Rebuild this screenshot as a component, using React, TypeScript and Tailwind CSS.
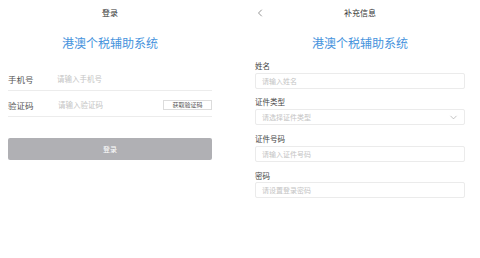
import { ChevronDown, ChevronLeft } from 'lucide-react'

const font = { fontFamily: '"Noto Sans CJK SC", "Noto Sans", sans-serif' }

function Field({ label, placeholder, select, labelTop, inputTop }: { label: string; placeholder: string; select?: boolean; labelTop: string; inputTop: string }) {
    return (
        <div>
            <p className={`${labelTop} text-[7.5px] leading-[10px] text-[#444]`}>{label}</p>
            <div className={`${inputTop} h-[16px] border border-[#ebebeb] rounded-[2px] flex items-center justify-between pl-[6px] pr-[5px]`}>
                <span className="text-[7px] leading-[10px] text-[#c4c4c4]">{placeholder}</span>
                {select && <ChevronDown className="w-[11px] h-[11px] text-[#a8a8a8]" strokeWidth={1.5} />}
            </div>
        </div>
    )
}

export default function App() {
    return (
        <main className="w-[480px] h-[258px] bg-white flex" style={font}>
            {/* 登录 */}
            <div className="w-[220px] px-[8px]">
                <div className="h-[26px] flex items-center justify-center">
                    <span className="text-[8px] text-[#333]">登录</span>
                </div>
                <h1 className="mt-[9px] h-[16px] text-center text-[12px] leading-[16px] text-[#4693dd]">港澳个税辅助系统</h1>

                <div className="mt-[17px] h-[23px] flex items-center border-b border-[#ececec]">
                    <span className="w-[49px] text-[8.5px] text-[#555]">手机号</span>
                    <span className="text-[7.5px] text-[#c4c4c4]">请输入手机号</span>
                </div>
                <div className="mt-[3px] h-[23px] flex items-center border-b border-[#ececec]">
                    <span className="w-[50px] text-[8.5px] text-[#555]">验证码</span>
                    <span className="flex-1 text-[7.5px] text-[#c4c4c4]">请输入验证码</span>
                    <button className="w-[49px] h-[10px] border border-[#dcdcdc] text-[6px] leading-[8px] text-[#555] flex items-center justify-center">
                        获取验证码
                    </button>
                </div>

                <button className="mt-[21px] w-full h-[22px] bg-[#b0b0b4] rounded-[2px] flex items-center justify-center text-[7px] text-white">
                    登录
                </button>
            </div>

            {/* 补充信息 */}
            <div className="ml-[20px] w-[240px] px-[15px]">
                <div className="relative h-[26px] flex items-center justify-center">
                    <ChevronLeft className="absolute left-[-1px] top-[7px] w-[12px] h-[12px] text-[#555]" strokeWidth={1.25} />
                    <span className="text-[8px] text-[#333]">补充信息</span>
                </div>
                <h1 className="mt-[9px] h-[16px] text-center text-[12px] leading-[16px] text-[#4693dd]">港澳个税辅助系统</h1>

                <Field label="姓名" placeholder="请输入姓名" labelTop="mt-[10px]" inputTop="mt-[2px]" />
                <Field label="证件类型" placeholder="请选择证件类型" select labelTop="mt-[8px]" inputTop="mt-[2px]" />
                <Field label="证件号码" placeholder="请输入证件号码" labelTop="mt-[9px]" inputTop="mt-[2px]" />
                <Field label="密码" placeholder="请设置登录密码" labelTop="mt-[9px]" inputTop="mt-[1px]" />
            </div>
        </main>
    )
}
